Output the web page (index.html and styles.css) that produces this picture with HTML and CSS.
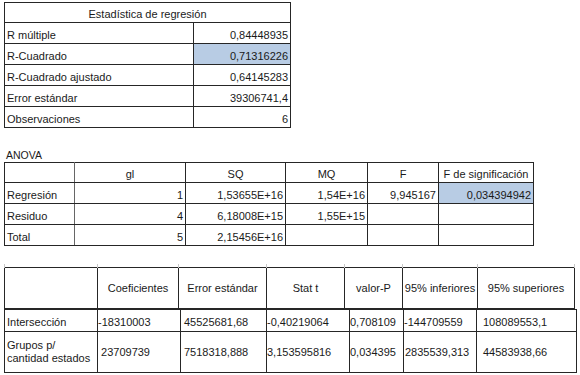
FILE: index.html
```html
<!DOCTYPE html>
<html lang="es">
<head>
<meta charset="utf-8">
<link rel="stylesheet" href="styles.css">
</head>
<body>
<div class="page">
  <table class="t1">
    <colgroup><col class="c1a"><col class="c1b"></colgroup>
    <tr class="h20"><td colspan="2" class="center">Estadística de regresión</td></tr>
    <tr class="h21"><td>R múltiple</td><td class="right">0,84448935</td></tr>
    <tr class="h21"><td>R-Cuadrado</td><td class="right sel">0,71316226</td></tr>
    <tr class="h21"><td>R-Cuadrado ajustado</td><td class="right">0,64145283</td></tr>
    <tr class="h21"><td>Error estándar</td><td class="right">39306741,4</td></tr>
    <tr class="h21"><td>Observaciones</td><td class="right">6</td></tr>
  </table>

  <div class="label">ANOVA</div>
  <table class="t2">
    <colgroup><col class="a1"><col class="a2"><col class="a3"><col class="a4"><col class="a5"><col class="a6"></colgroup>
    <tr class="h20"><td></td><td class="center">gl</td><td class="center">SQ</td><td class="center">MQ</td><td class="center">F</td><td class="center">F de significación</td></tr>
    <tr class="h21"><td>Regresión</td><td class="right">1</td><td class="right">1,53655E+16</td><td class="right">1,54E+16</td><td class="right">9,945167</td><td class="right sel">0,034394942</td></tr>
    <tr class="h21"><td>Residuo</td><td class="right">4</td><td class="right">6,18008E+15</td><td class="right">1,55E+15</td><td></td><td></td></tr>
    <tr class="h21"><td>Total</td><td class="right">5</td><td class="right">2,15456E+16</td><td></td><td></td><td></td></tr>
  </table>

  <table class="t3h">
    <colgroup><col class="h1"><col class="h2"><col class="h3"><col class="h4"><col class="h5"><col class="h6"><col class="h7"></colgroup>
    <tr class="ticks"><td></td><td></td><td></td><td></td><td></td><td></td><td></td></tr>
    <tr class="h41"><td></td><td>Coeficientes</td><td>Error estándar</td><td>Stat t</td><td>valor-P</td><td>95% inferiores</td><td>95% superiores</td></tr>
  </table>
  <table class="t3b">
    <colgroup><col class="b1"><col class="b2"><col class="b3"><col class="b4"><col class="b5"><col class="b6"><col class="b7"></colgroup>
    <tr class="h22"><td class="pl">Intersección</td><td class="num2">-18310003</td><td class="pl3">45525681,68</td><td>-0,40219064</td><td>0,708109</td><td>-144709559</td><td class="pl6">108089553,1</td></tr>
    <tr class="h41 mid"><td class="pl">Grupos p/<br>cantidad estados</td><td class="num2">23709739</td><td class="pl3">7518318,888</td><td>3,153595816</td><td>0,034395</td><td class="pl1">2835539,313</td><td class="pl6">44583938,66</td></tr>
  </table>
  <div class="caption">Fuente: Elaboración Propia</div>
</div>
</body>
</html>
```

FILE: styles.css
```css
html, body {
  margin: 0;
  background: #ffffff;
}
body {
  font-family: "Liberation Sans", Arial, sans-serif;
  font-size: 11px;
  color: #1a1a1a;
}
.page {
  padding: 2px 0 0 4px;
}
table {
  border-collapse: collapse;
  table-layout: fixed;
}
td {
  border: 1px solid #262626;
  padding: 0 2px 1px 2px;
  white-space: nowrap;
  overflow: visible;
  vertical-align: bottom;
  line-height: 13px;
}
.center { text-align: center; }
.right { text-align: right; }
.sel { background: #b8cce4; }

.t1 { width: 286px; }
.c1a { width: 189px; }
.c1b { width: 97px; }
.h20 { height: 20px; }
.h21 { height: 21px; }
.h22 { height: 22px; }
.h41 { height: 41px; }

.label {
  margin-top: 21px;
  line-height: 13px;
  font-size: 10.5px;
  padding-left: 2px;
}

.t2 { width: 529px; }
.a1 { width: 70px; }
.a2 { width: 111px; }
.a3 { width: 100px; }
.a4 { width: 82px; }
.a5 { width: 71px; }
.a6 { width: 95px; }
.t2 td:first-child { border-right-color: #666; }

.t3h {
  margin-top: 18px;
  width: 570px;
}
.t3h td {
  text-align: center;
  vertical-align: middle;
  padding: 0;
}
.t3h .ticks td {
  height: 3px;
  border-top: none;
  border-bottom: none;
  border-left-color: #c8c8c8;
  border-right-color: #c8c8c8;
}
.h1 { width: 93px; }
.h2 { width: 81px; }
.h3 { width: 88px; }
.h4 { width: 78px; }
.h5 { width: 58px; }
.h6 { width: 75px; }
.h7 { width: 97px; }

.t3b { width: 572px; }
.t3b td { padding: 0 0 2px 0; }
.b1 { width: 93px; }
.b2 { width: 83px; }
.b3 { width: 86px; }
.b4 { width: 83px; }
.b5 { width: 54px; }
.b6 { width: 73px; }
.b7 { width: 100px; }
.t3b .mid td { vertical-align: middle; padding-bottom: 0; }
.t3b .pl { padding-left: 2px; }
.t3b .pl1 { padding-left: 1px; }
.t3b .pl3 { padding-left: 3px; }
.t3b .pl6 { padding-left: 6px; }
.t3b .num2 { text-align: right; padding-right: 30px; }

.caption {
  margin-top: 1px;
  padding-left: 241px;
  line-height: 13px;
}
```
